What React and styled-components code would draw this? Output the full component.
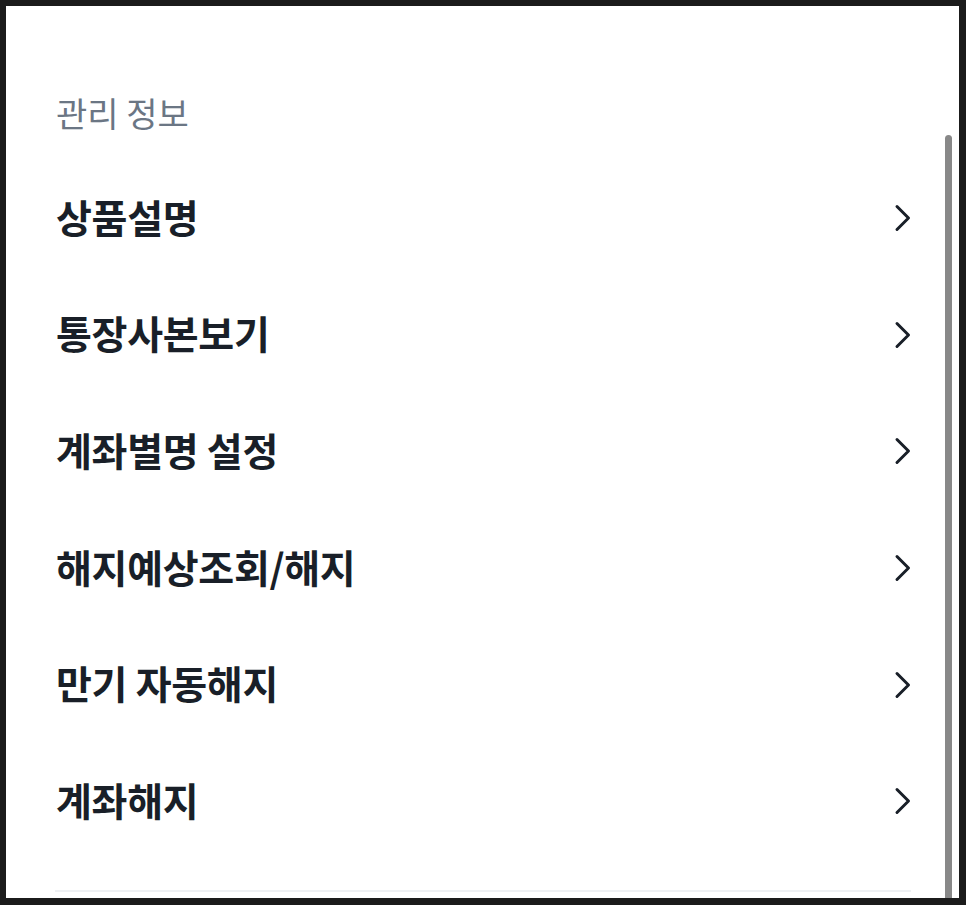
import React from "react";
import styled, { createGlobalStyle } from "styled-components";

const GlobalStyle = createGlobalStyle`
  html, body {
    margin: 0;
    padding: 0;
    background: #1b1b1b;
  }
  body {
    font-family: "Noto Sans CJK KR", "Noto Sans", sans-serif;
  }
`;

const Frame = styled.div`
  width: 966px;
  height: 905px;
  box-sizing: border-box;
  padding: 6px 7px 7px 6px;
  background: #1b1b1b;
`;

const Panel = styled.div`
  position: relative;
  height: 100%;
  background: #ffffff;
  overflow: hidden;
  box-sizing: border-box;
  padding: 86px 48px 0 50px;
`;

const Heading = styled.h2`
  margin: 0 0 24px;
  font-size: 34px;
  line-height: 42px;
  font-weight: 400;
  color: #6b7684;
  letter-spacing: 0;
`;

const List = styled.ul`
  list-style: none;
  margin: 0;
  padding: 0;
`;

const Row = styled.li`
  height: 116.6px;
  display: flex;
  align-items: center;
  justify-content: space-between;
`;

const Label = styled.span`
  font-size: 39px;
  font-weight: 700;
  color: #191f28;
  letter-spacing: -0.3px;
  line-height: 1;
`;

const Chevron = styled.svg`
  width: 20px;
  height: 30px;
  margin-right: -2px;
  margin-top: 4px;
  flex: none;
`;

const Divider = styled.div`
  margin: 32px 0 0 -1px;
  height: 2px;
  background: #eef0f3;
`;

const Scrollbar = styled.div`
  position: absolute;
  right: 7px;
  top: 129px;
  bottom: -10px;
  width: 7px;
  border-radius: 4px;
  background: #888888;
`;

const items = [
  "상품설명",
  "통장사본보기",
  "계좌별명 설정",
  "해지예상조회/해지",
  "만기 자동해지",
  "계좌해지",
];

const ChevronIcon = () => (
  <Chevron viewBox="0 0 20 30" fill="none">
    <path
      d="M4 3.5 L15.5 15 L4 26.5"
      stroke="#191f28"
      strokeWidth="3"
      strokeLinecap="round"
      strokeLinejoin="round"
    />
  </Chevron>
);

export default function App() {
  return (
    <>
      <GlobalStyle />
      <Frame>
        <Panel>
          <Heading>관리 정보</Heading>
          <List>
            {items.map((t) => (
              <Row key={t}>
                <Label>{t}</Label>
                <ChevronIcon />
              </Row>
            ))}
          </List>
          <Divider />
          <Scrollbar />
        </Panel>
      </Frame>
    </>
  );
}
